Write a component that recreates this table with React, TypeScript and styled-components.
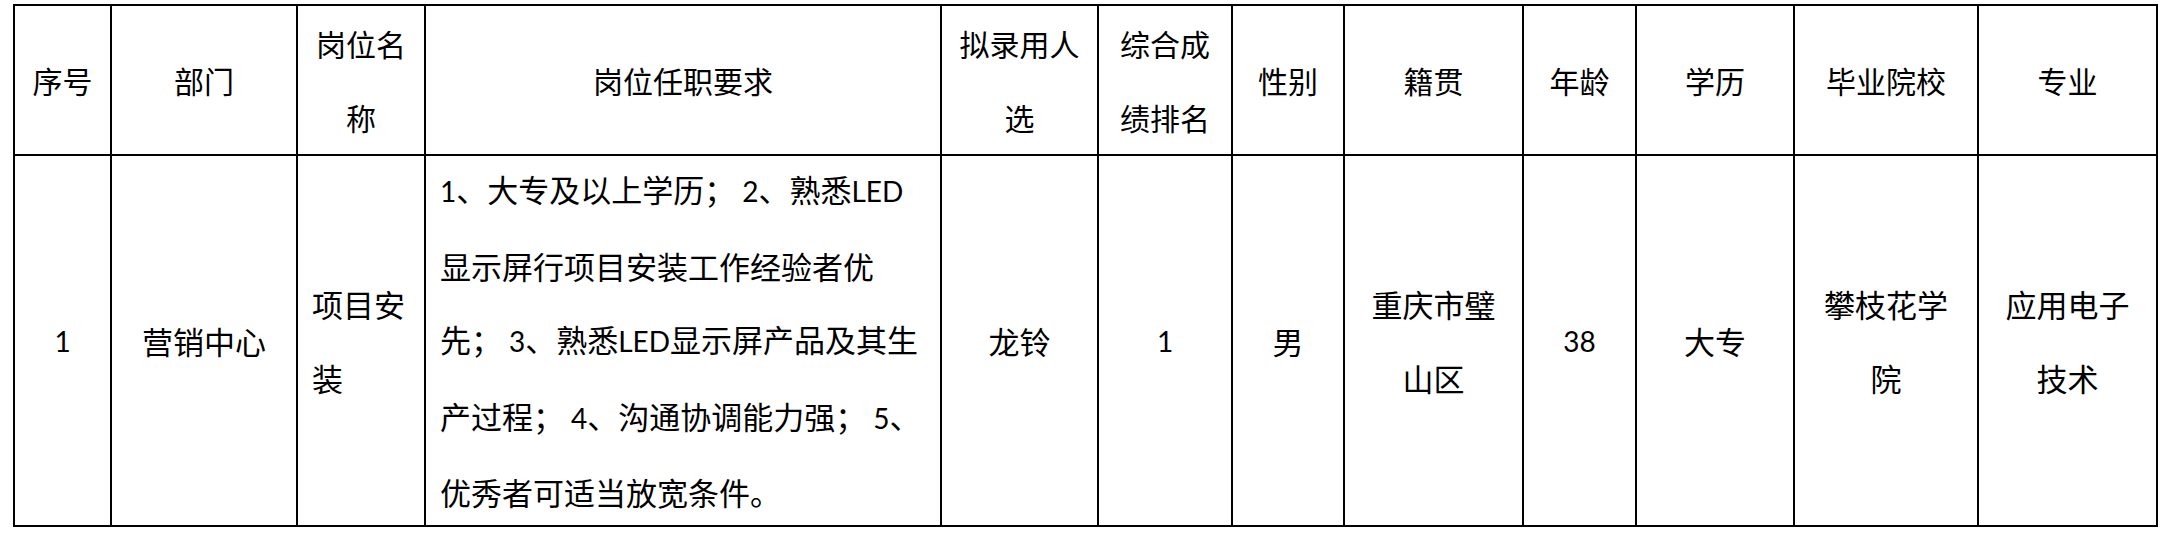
import styled, { createGlobalStyle } from "styled-components";

const GlobalStyle = createGlobalStyle`
    html, body {
        margin: 0;
        padding: 0;
        background: #ffffff;
    }
`;

const columns = [95, 184, 126, 514, 155, 132, 110, 177, 111, 156, 182, 177];

const Page = styled.div`
    padding: 4px 0 0 13px;
`;

const Grid = styled.div`
    display: inline-grid;
    grid-template-columns: ${columns.map((w) => `${w}px`).join(" ")};
    grid-template-rows: 148px 369px;
    gap: 2px;
    padding: 2px;
    background: #000000;
`;

type CellProps = {
    $head?: boolean;
    $left?: boolean;
};

const Cell = styled.div<CellProps>`
    background: #ffffff;
    color: #000000;
    display: flex;
    flex-direction: column;
    justify-content: center;
    align-items: ${(p) => (p.$left ? "flex-start" : "center")};
    padding: ${(p) => (p.$left ? "0 0 0 14px" : "0")};
    overflow: hidden;
    font-family: "Noto Sans CJK SC", sans-serif;
    font-size: ${(p) => (p.$head ? "30px" : "31px")};
    line-height: ${(p) => (p.$head ? "74px" : "73.5px")};
`;

const Text = styled.div<{ $left?: boolean }>`
    white-space: pre-line;
    text-align: ${(p) => (p.$left ? "left" : "center")};
`;

// latin runs are set smaller, Lato stands in for the narrower Calibri
const Latin = styled.span`
    font-family: Lato, sans-serif;
    font-size: 28px;
`;

const withLatin = (text: string) =>
    text.split(/([A-Za-z0-9]+)/).map((part, i) =>
        /^[A-Za-z0-9]+$/.test(part) ? <Latin key={i}>{part}</Latin> : part
    );

const headers = [
    "序号",
    "部门",
    "岗位名\n称",
    "岗位任职要求",
    "拟录用人\n选",
    "综合成\n绩排名",
    "性别",
    "籍贯",
    "年龄",
    "学历",
    "毕业院校",
    "专业",
];

const row = [
    { text: "1" },
    { text: "营销中心" },
    { text: "项目安\n装", left: true },
    {
        text:
            "1、大专及以上学历； 2、熟悉LED\n" +
            "显示屏行项目安装工作经验者优\n" +
            "先； 3、熟悉LED显示屏产品及其生\n" +
            "产过程； 4、沟通协调能力强； 5、\n" +
            "优秀者可适当放宽条件。",
        left: true,
    },
    { text: "龙铃" },
    { text: "1" },
    { text: "男" },
    { text: "重庆市璧\n山区" },
    { text: "38" },
    { text: "大专" },
    { text: "攀枝花学\n院" },
    { text: "应用电子\n技术" },
];

const App: React.FC = () => {
    return (
        <Page>
            <GlobalStyle />
            <Grid>
                {headers.map((h) => (
                    <Cell key={h} $head>
                        <Text>{h}</Text>
                    </Cell>
                ))}
                {row.map((c, i) => (
                    <Cell key={i} $left={c.left}>
                        <Text $left={c.left}>{withLatin(c.text)}</Text>
                    </Cell>
                ))}
            </Grid>
        </Page>
    );
};

export default App;
